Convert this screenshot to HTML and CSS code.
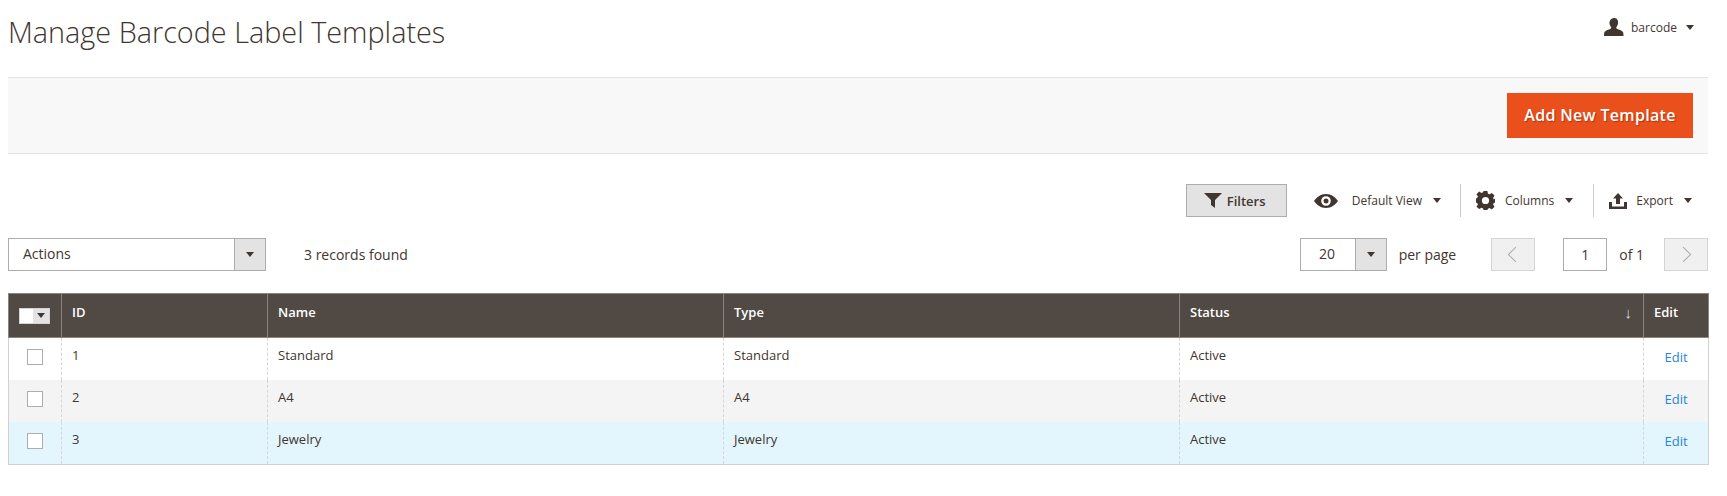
FILE: index.html
```html
<!DOCTYPE html>
<html lang="en">
<head>
  <meta charset="UTF-8" />
  <title>Manage Barcode Label Templates</title>
  <link rel="stylesheet" href="styles.css">
</head>
<body>

  <header class="page-header">
    <h1 class="page-title">Manage Barcode Label Templates</h1>
    <div class="admin-user">
      <svg class="icon-user" viewBox="0 0 20 18"><path d="M10 0c3 0 4.300 2.200 4.100 4.800-.1 1.600-.7 3-1.500 4-.5.600-.4 1.500.3 1.900 1.900 1 5.100 1.500 6.100 3.300.4.800.5 2.500.5 4H0c0-1.500.1-3.200.5-4 1-1.800 4.200-2.300 6.100-3.300.7-.4.800-1.300.3-1.900-.8-1-1.400-2.400-1.500-4C5.700 2.200 7 0 10 0z"/></svg>
      <span class="admin-name">barcode</span>
      <span class="caret"></span>
    </div>
  </header>

  <div class="page-actions">
    <button class="btn-primary">Add New Template</button>
  </div>

  <div class="grid-tools">
    <button class="btn-filters">
      <svg class="icon-filter" viewBox="0 0 18 15"><path d="M0 0h18l-7 7v8l-4-3V7z"/></svg>
      Filters
    </button>
    <div class="tool tool-view">
      <svg class="icon-eye" viewBox="0 0 24 14"><path fill-rule="evenodd" d="M12 0c5.500 0 9.700 3.500 12 7-2.300 3.500-6.500 7-12 7S2.300 10.500 0 7c2.300-3.500 6.500-7 12-7zm0 2.200a4.800 4.800 0 1 0 0 9.600 4.800 4.800 0 0 0 0-9.600zm0 2.300a2.500 2.500 0 1 1 0 5 2.500 2.500 0 0 1 0-5z"/></svg>
      <span>Default View</span>
      <span class="caret caret-tool"></span>
    </div>
    <div class="tool tool-columns">
      <svg class="icon-gear" viewBox="0 0 20 20"><path fill-rule="evenodd" d="M8 0h4l.6 2.800 1.600.7L16.700 2l2.800 2.800-1.500 2.500.7 1.600L20 8v4l-1.300.6-.7 1.600 1.500 2.500-2.800 2.800-2.500-1.500-1.600.7L12 20H8l-.6-1.700-1.600-.7L3.300 19 .5 16.700 2 14.200l-.7-1.600L0 12V8l1.300-.6.700-1.600L.5 3.300 3.300.5l2.500 1.500 1.600-.7zM10 6.200a3.800 3.800 0 1 0 0 7.600 3.800 3.800 0 0 0 0-7.600z"/></svg>
      <span>Columns</span>
      <span class="caret caret-tool"></span>
    </div>
    <div class="tool tool-export">
      <svg class="icon-export" viewBox="0 0 18 16"><path d="M9 0l5 5.500h-3V11H7V5.500H4zM0 9h3v4.500h12V9h3v7H0z"/></svg>
      <span>Export</span>
      <span class="caret caret-tool"></span>
    </div>
  </div>

  <div class="grid-pager">
    <div class="select select-actions">
      <span class="select-value">Actions</span>
      <span class="select-arrow"><span class="caret"></span></span>
    </div>
    <span class="records">3 records found</span>
    <div class="select select-perpage">
      <span class="select-value">20</span>
      <span class="select-arrow"><span class="caret"></span></span>
    </div>
    <span class="per-page">per page</span>
    <button class="page-btn page-prev"><span class="chev chev-left"></span></button>
    <span class="page-input">1</span>
    <span class="page-total">of 1</span>
    <button class="page-btn page-next"><span class="chev chev-right"></span></button>
  </div>

  <table class="grid">
    <colgroup>
      <col class="col-check">
      <col class="col-id">
      <col class="col-text">
      <col class="col-text">
      <col class="col-status">
      <col class="col-edit">
    </colgroup>
    <thead>
      <tr>
        <th class="th-check">
          <span class="mass-select"><span class="mass-box"></span><span class="mass-arrow"><span class="caret"></span></span></span>
        </th>
        <th>ID</th>
        <th>Name</th>
        <th>Type</th>
        <th><span class="th-sorted">Status <span class="sort-arrow">↓</span></span></th>
        <th>Edit</th>
      </tr>
    </thead>
    <tbody>
      <tr>
        <td class="td-check"><span class="checkbox"></span></td>
        <td>1</td>
        <td>Standard</td>
        <td>Standard</td>
        <td>Active</td>
        <td class="td-edit"><a href="#">Edit</a></td>
      </tr>
      <tr class="row-alt">
        <td class="td-check"><span class="checkbox"></span></td>
        <td>2</td>
        <td>A4</td>
        <td>A4</td>
        <td>Active</td>
        <td class="td-edit"><a href="#">Edit</a></td>
      </tr>
      <tr class="row-hover">
        <td class="td-check"><span class="checkbox"></span></td>
        <td>3</td>
        <td>Jewelry</td>
        <td>Jewelry</td>
        <td>Active</td>
        <td class="td-edit"><a href="#">Edit</a></td>
      </tr>
    </tbody>
  </table>

</body>
</html>
```

FILE: styles.css
```css
*, *::before, *::after { box-sizing: border-box; margin: 0; padding: 0; }

body {
  background: #fff;
  color: #41362f;
  font-family: 'Open Sans', sans-serif;
  font-size: 14px;
  padding: 0 19px 0 8px;
}

.caret {
  display: inline-block;
  width: 0;
  height: 0;
  border-left: 4px solid transparent;
  border-right: 4px solid transparent;
  border-top: 5px solid #41362f;
}

/* Page header */
.page-header {
  height: 77px;
  display: flex;
  justify-content: space-between;
  align-items: flex-start;
}

.page-title {
  font-size: 28.8px;
  font-weight: 300;
  line-height: 38px;
  margin-top: 13px;
}

.admin-user {
  display: flex;
  align-items: center;
  margin-top: 18px;
  margin-right: 14px;
  font-size: 12px;
  color: #41362f;
}

.icon-user { width: 20px; height: 18px; fill: #41362f; margin-right: 7px; }
.admin-name { margin-right: 9px; }

/* Action bar */
.page-actions {
  height: 77px;
  background: #f8f8f8;
  border-top: 1px solid #e3e3e3;
  border-bottom: 1px solid #e3e3e3;
  padding: 15px 15px 0 0;
  display: flex;
  justify-content: flex-end;
}

.btn-primary {
  width: 186px;
  height: 45px;
  padding-bottom: 2px;
  background: #e9501b;
  color: #fff;
  border: none;
  font-family: inherit;
  font-size: 16px;
  font-weight: 600;
  letter-spacing: 0.02em;
  text-shadow: 1px 1px 1px rgba(0,0,0,0.3);
}

/* Filters and view tools */
.grid-tools {
  height: 33px;
  margin-top: 30px;
  display: flex;
  align-items: stretch;
  justify-content: flex-end;
}

.btn-filters {
  width: 101px;
  height: 33px;
  padding-left: 17px;
  background: #e3e3e3;
  border: 1px solid #adadad;
  color: #41362f;
  font-family: inherit;
  font-size: 13px;
  font-weight: 600;
  display: flex;
  align-items: center;
  gap: 5px;
  margin-right: 27px;
}

.icon-filter { width: 18px; height: 15px; fill: #41362f; }

.tool {
  display: flex;
  align-items: center;
  font-size: 12px;
  color: #41362f;
}

.tool-view { margin-right: 19px; }
.tool-columns { border-left: 1px solid #ccc; padding: 0 20px 0 15px; }
.tool-export { border-left: 1px solid #ccc; padding-left: 15px; margin-right: 16px; }

.icon-eye { width: 24px; height: 14px; fill: #41362f; margin-right: 14px; }
.icon-gear { width: 19px; height: 19px; fill: #41362f; margin-right: 10px; }
.icon-export { width: 18px; height: 16px; fill: #41362f; margin-right: 9px; }
.caret-tool { margin-left: 11px; }

/* Actions select and pager */
.grid-pager {
  height: 33px;
  margin-top: 21px;
  display: flex;
  align-items: center;
}

.select {
  height: 33px;
  display: flex;
  background: #fff;
  border: 1px solid #adadad;
}

.select-value {
  flex: 1;
  line-height: 30px;
  font-size: 14px;
}

.select-arrow {
  width: 31px;
  background: #e3e3e3;
  border-left: 1px solid #adadad;
  display: flex;
  align-items: center;
  justify-content: center;
}

.select-actions { width: 258px; }
.select-actions .select-value { padding-left: 14px; }

.select-perpage { width: 87px; margin-left: auto; }
.select-perpage .select-value { text-align: center; padding-right: 1px; }

.records { margin-left: 38px; margin-top: -1px; }
.per-page { margin-left: 12px; margin-right: 35px; }

.page-btn {
  width: 44px;
  height: 33px;
  background: #f0f0f0;
  border: 1px solid #d4d4d4;
  display: flex;
  align-items: center;
  justify-content: center;
}

.chev {
  width: 11px;
  height: 11px;
  border-left: 1.5px solid #aaa;
  border-bottom: 1.5px solid #aaa;
}

.chev-left { transform: rotate(45deg); margin-left: 5px; }
.chev-right { transform: rotate(225deg); margin-right: 5px; }

.page-input {
  width: 44px;
  height: 33px;
  margin-left: 28px;
  border: 1px solid #adadad;
  text-align: center;
  line-height: 31px;
}

.page-total { margin-left: 12px; margin-right: 20px; }

/* Data grid */
.grid {
  width: 1700px;
  margin-top: 22px;
  table-layout: fixed;
  border-collapse: collapse;
  font-size: 13px;
  border: 1px solid #d1d1d1;
}

.col-check { width: 53px; }
.col-id { width: 206px; }
.col-text { width: 456px; }
.col-status { width: 464px; }
.col-edit { width: 65px; }

.grid th {
  height: 44px;
  background: #514943;
  color: #fff;
  font-size: 13px;
  font-weight: 600;
  text-align: left;
  padding: 0 10px 8px;
  border: 1px solid #8a837f;
}

.grid td {
  height: 42px;
  padding: 0 10px 8px;
  background: #fff;
  border-left: 1px dashed #d6d6d6;
  border-right: 1px dashed #d6d6d6;
}

.grid tr td:first-child { border-left: 1px solid #d1d1d1; }
.grid tr td:last-child { border-right: 1px solid #d1d1d1; }

.grid .row-alt td { background: #f4f4f4; }
.grid .row-hover td { background: #e3f5fd; height: 43px; }
.grid tbody tr:last-child td { border-bottom: 1px solid #d1d1d1; }

.grid .th-check { padding: 0 0 0 10px; vertical-align: middle; }

.mass-select {
  display: flex;
  width: 31px;
  height: 16px;
  border: 1px solid #d4d4d4;
}

.mass-box { flex: 1; background: #fff; }

.mass-arrow {
  width: 16px;
  background: #e3e3e3;
  display: flex;
  align-items: center;
  justify-content: center;
}

.th-sorted { display: flex; justify-content: space-between; }
.sort-arrow { font-weight: 400; color: #ddd; font-size: 15px; line-height: 18px; padding-right: 1px; }

.grid .td-check { padding: 0 0 1px; }

.checkbox {
  display: block;
  width: 16px;
  height: 16px;
  margin: 0 0 2px 18px;
  background: #fff;
  border: 1px solid #adadad;
}

.grid .td-edit { text-align: center; padding: 0 0 3px; }
.td-edit a { color: #1f85da; text-decoration: none; font-size: 13px; }
```
